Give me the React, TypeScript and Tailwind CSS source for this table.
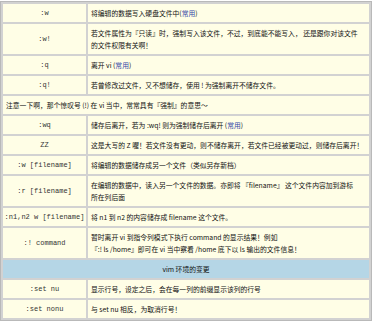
const Hot = () => <span className="text-[#3447a6]">常用</span>

type Row =
  | { kind: "cmd"; cmd: string; lines: React.ReactNode[] }
  | { kind: "note"; text: string }
  | { kind: "head"; text: string }

const rows: Row[] = [
  { kind: "cmd", cmd: ":w", lines: [<>将编辑的数据写入硬盘文件中(<Hot />)</>] },
  {
    kind: "cmd",
    cmd: ":w!",
    lines: ["若文件属性为『只读』时，强制写入该文件，不过，到底能不能写入， 还是跟你对该文件", "的文件权限有关啊！"],
  },
  { kind: "cmd", cmd: ":q", lines: [<>离开 vi (<Hot />)</>] },
  { kind: "cmd", cmd: ":q!", lines: ["若曾修改过文件，又不想储存，使用 ! 为强制离开不储存文件。"] },
  { kind: "note", text: "注意一下啊，那个惊叹号 (!) 在 vi 当中，常常具有『强制』的意思～" },
  { kind: "cmd", cmd: ":wq", lines: [<>储存后离开，若为 :wq! 则为强制储存后离开 (<Hot />)</>] },
  { kind: "cmd", cmd: "ZZ", lines: ["这是大写的 Z 喔！若文件没有更动，则不储存离开，若文件已经被更动过，则储存后离开！"] },
  { kind: "cmd", cmd: ":w [filename]", lines: ["将编辑的数据储存成另一个文件（类似另存新档）"] },
  {
    kind: "cmd",
    cmd: ":r [filename]",
    lines: ["在编辑的数据中，读入另一个文件的数据。亦即将 『filename』 这个文件内容加到游标", "所在列后面"],
  },
  { kind: "cmd", cmd: ":n1,n2 w [filename]", lines: ["将 n1 到 n2 的内容储存成 filename 这个文件。"] },
  {
    kind: "cmd",
    cmd: ":! command",
    lines: ["暂时离开 vi 到指令列模式下执行 command 的显示结果！例如", "『:! ls /home』即可在 vi 当中察看 /home 底下以 ls 输出的文件信息！"],
  },
  { kind: "head", text: "vim 环境的变更" },
  { kind: "cmd", cmd: ":set nu", lines: ["显示行号，设定之后，会在每一列的前缀显示该列的行号"] },
  { kind: "cmd", cmd: ":set nonu", lines: ["与 set nu 相反，为取消行号！"] },
]

export default function App() {
  return (
    <div className="w-[373px] h-[328px] bg-white pt-px font-['Noto_Sans_CJK_SC',sans-serif] text-[6.8px] leading-[12px] text-[#111]">
      <table className="table-fixed w-[372px] border-separate border-spacing-0.5 bg-[#d2d2d2] border border-[#b9b9b9]">
        <tbody>
          {rows.map((row, idx) => {
            if (row.kind === "note")
              return (
                <tr key={idx}>
                  <td colSpan={2} className="bg-[#fffee6] h-[18px] px-[3px] py-[3px] whitespace-nowrap overflow-hidden">
                    {row.text}
                  </td>
                </tr>
              )
            if (row.kind === "head")
              return (
                <tr key={idx}>
                  <td colSpan={2} className="bg-[#b5d6e6] h-[18px] py-[3px] text-center">
                    {row.text}
                  </td>
                </tr>
              )
            return (
              <tr key={idx}>
                <td className="w-[83px] bg-[#fffee6] h-[18px] py-[3px] text-center align-middle whitespace-nowrap font-['Liberation_Mono',monospace] text-[7px] text-[#333]">
                  {row.cmd}
                </td>
                <td className="bg-[#fffee6] px-[3px] py-[3px] align-middle overflow-hidden">
                  {row.lines.map((line, i) => (
                    <div key={i} className="whitespace-nowrap">
                      {line}
                    </div>
                  ))}
                </td>
              </tr>
            )
          })}
        </tbody>
      </table>
    </div>
  )
}
